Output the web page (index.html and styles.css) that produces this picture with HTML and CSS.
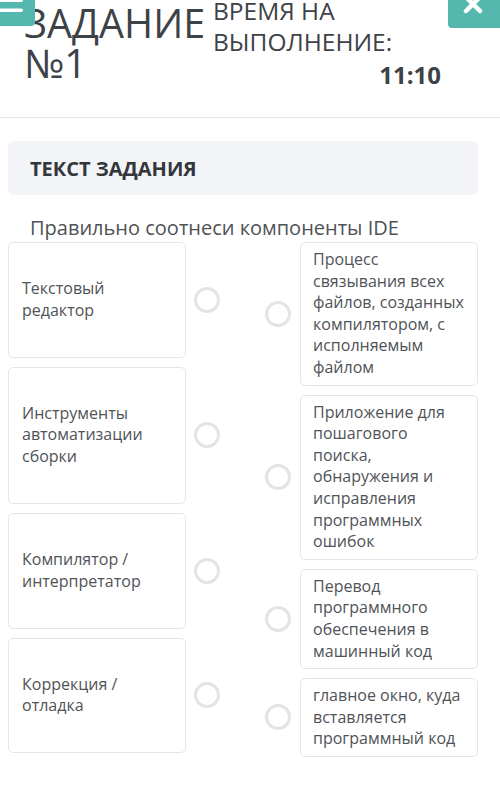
FILE: index.html
```html
<!DOCTYPE html>
<html lang="ru">
<head>
<meta charset="utf-8">
<link rel="stylesheet" href="styles.css">
</head>
<body>
<header class="header">
  <div class="title">ЗАДАНИЕ<br>№1</div>
  <div class="timer">
    <div class="timer-label">ВРЕМЯ НА<br>ВЫПОЛНЕНИЕ:</div>
    <div class="timer-value">11:10</div>
  </div>
  <button class="menu-btn" aria-label="menu">
    <svg width="35" height="26" viewBox="0 0 35 26"><rect x="-4" y="-1.5" width="27" height="3.6" rx="1.8" fill="#fff"/><rect x="-4" y="8.5" width="27" height="3.6" rx="1.8" fill="#fff"/></svg>
  </button>
  <button class="close-btn" aria-label="close">
    <svg width="52" height="28" viewBox="0 0 52 28"><path d="M18 -3 L32 11 M32 -3 L18 11" stroke="#fff" stroke-width="4.5" stroke-linecap="round"/></svg>
  </button>
</header>

<main class="content">
  <div class="task-head">ТЕКСТ ЗАДАНИЯ</div>
  <p class="instruction">Правильно соотнеси компоненты IDE</p>
  <div class="match">
    <div class="col col-left">
      <div class="item"><div class="card card-left">Текстовый<br>редактор</div><span class="radio"></span></div>
      <div class="item"><div class="card card-left">Инструменты<br>автоматизации<br>сборки</div><span class="radio"></span></div>
      <div class="item"><div class="card card-left">Компилятор /<br>интерпретатор</div><span class="radio"></span></div>
      <div class="item"><div class="card card-left">Коррекция /<br>отладка</div><span class="radio"></span></div>
    </div>
    <div class="col col-right">
      <div class="item"><span class="radio"></span><div class="card card-right">Процесс<br>связывания всех<br>файлов, созданных<br>компилятором, с<br>исполняемым<br>файлом</div></div>
      <div class="item"><span class="radio"></span><div class="card card-right">Приложение для<br>пошагового<br>поиска,<br>обнаружения и<br>исправления<br>программных<br>ошибок</div></div>
      <div class="item"><span class="radio"></span><div class="card card-right">Перевод<br>программного<br>обеспечения в<br>машинный код</div></div>
      <div class="item"><span class="radio"></span><div class="card card-right">главное окно, куда<br>вставляется<br>программный код</div></div>
    </div>
  </div>
</main>
</body>
</html>
```
FILE: styles.css
```css
* { box-sizing: border-box; }
html, body { margin: 0; padding: 0; background: #fff; }
body {
  font-family: "Open Sans", "Noto Sans", sans-serif;
  color: #4a4d52;
  width: 500px;
  overflow: hidden;
}

.header {
  position: relative;
  display: flex;
  height: 118px;
  border-bottom: 1px solid #e6e7e9;
  padding: 3px 0 0 24px;
}
.title {
  font-size: 39.5px;
  line-height: 40px;
  color: #3d4247;
  font-weight: 400;
  width: 189px;
}
.timer {
  width: 228px;
  margin-top: -8px;
  display: flex;
  flex-direction: column;
}
.timer-label {
  font-size: 24.5px;
  line-height: 31px;
  color: #3d4247;
}
.timer-value {
  font-size: 24px;
  line-height: 31px;
  font-weight: 700;
  color: #3d4247;
  text-align: right;
  margin-top: 2px;
}

.menu-btn, .close-btn {
  position: absolute;
  top: 0;
  border: 0;
  padding: 0;
  margin: 0;
  background: #55b8ae;
  display: block;
}
.menu-btn {
  left: 0;
  width: 35px;
  height: 26px;
  border-bottom-right-radius: 4px;
}
.close-btn {
  right: 0;
  width: 52px;
  height: 28px;
  border-bottom-left-radius: 4px;
}
.menu-btn svg, .close-btn svg { display: block; }

.content {
  padding: 23px 22px 0 8px;
}
.task-head {
  height: 54px;
  background: #f2f4f7;
  border-radius: 6px;
  display: flex;
  align-items: center;
  padding-left: 22px;
  font-size: 20px;
  font-weight: 700;
  color: #33373b;
}
.instruction {
  margin: 20px 0 0 22px;
  font-size: 20px;
  line-height: 26px;
  color: #4f5256;
}

.match {
  display: grid;
  grid-template-columns: 235px 235px;
  margin-top: 1px;
}
.col {
  display: flex;
  flex-direction: column;
  gap: 9px;
}
.item {
  display: flex;
  align-items: center;
}
.col-right .item { justify-content: flex-end; }

.card {
  width: 178px;
  border: 1px solid #e5e6e8;
  border-radius: 5px;
  background: #fff;
  font-size: 16px;
  line-height: 21.8px;
  color: #505357;
}
.card-left {
  padding: 35px 10px 35px 13px;
}
.card-right {
  padding: 6px 8px 6px 12px;
  margin-left: 9px;
  line-height: 21.6px;
}
.radio {
  width: 26px;
  height: 26px;
  border-radius: 50%;
  border: 3px solid #e4e4e4;
  background: #fff;
  flex: none;
}
.col-left .radio { margin-left: 8px; }
```
